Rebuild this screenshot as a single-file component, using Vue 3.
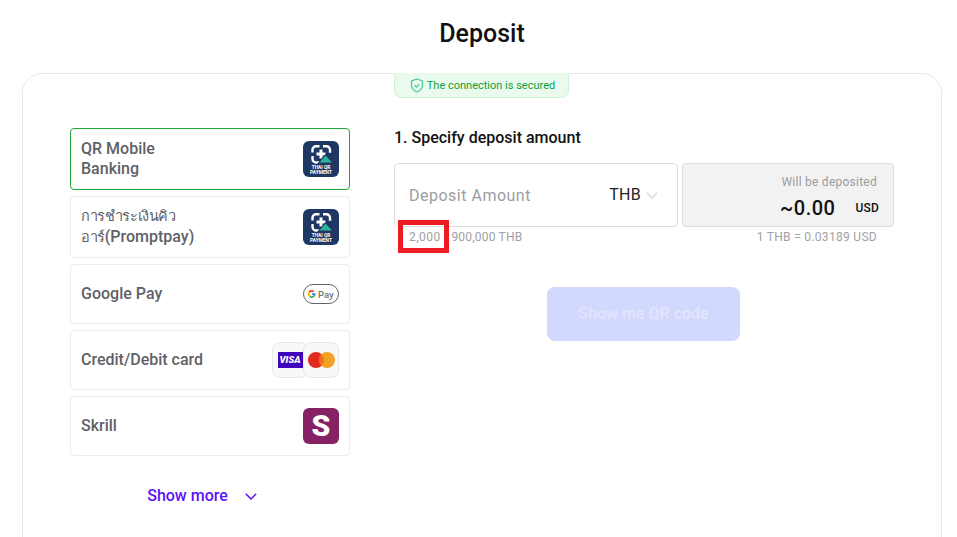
<template>
  <div class="page">
    <h1 class="title">Deposit</h1>
    <div class="card">
      <div class="methods">
        <div
          v-for="m in methods"
          :key="m.name"
          class="method"
          :class="{ active: m.active, tall: m.tall }"
        >
          <span v-if="m.thai" class="method-name">
            <span class="thai">{{ m.thai[0] }}</span><br />
            <span class="thai">{{ m.thai[1] }}</span>{{ m.name }}
          </span>
          <span v-else class="method-name">{{ m.name }}</span>
          <svg v-if="m.icon === 'qr'" class="logo" viewBox="0 0 36 36">
            <rect width="36" height="36" rx="6" fill="#1f3763" />
            <path d="M16.500 5.200h-3.500a3.500 3.500 0 0 0-3.500 3.500v2.800M9.500 15v3a3.500 3.500 0 0 0 3.500 3.500h3.500M20 5.200h3.500a3.500 3.500 0 0 1 3.500 3.500v3" fill="none" stroke="#fff" stroke-width="2.400" />
            <path d="M16.500 8.500h3v3h3v3h-3v3h-3v-3h-3v-3h3z" fill="#fff" />
            <path d="M14 23l8.500-10 9.500 10z" fill="#1f3763" />
            <path d="M16.500 21.500l6-7 6.500 7z" fill="#2bb39a" />
            <text x="18" y="28" class="qr-text">THAI QR</text>
            <text x="18" y="32.500" class="qr-text">PAYMENT</text>
          </svg>
          <svg v-else-if="m.icon === 'gpay'" class="gpay" viewBox="0 0 36 20">
            <rect x="0.500" y="0.500" width="35" height="19" rx="9.500" fill="#fff" stroke="#5f6368" />
            <path d="M12.600 10.100a4 4 0 0 1-.1 1H9v-1.900h3.500z" fill="#4285f4" />
            <path d="M12.500 11.100a4 4 0 0 1-6.300 1.900l1.300-1.200a2.200 2.200 0 0 0 3.200-.7z" fill="#34a853" />
            <path d="M6.200 13a4 4 0 0 1-.7-5.400l1.500 1.200a2.200 2.200 0 0 0 .5 3z" fill="#fbbc04" />
            <path d="M5.500 7.600a4 4 0 0 1 6-.6l-1.300 1.300a2.200 2.200 0 0 0-3.200.5z" fill="#ea4335" />
            <text x="15" y="13.500" class="gpay-text">Pay</text>
          </svg>
          <div v-else-if="m.icon === 'cards'" class="cards">
            <div class="card-chip">
              <div class="visa">VISA</div>
            </div>
            <div class="card-chip over">
              <svg class="mc" viewBox="0 0 27 16">
                <circle cx="8" cy="8" r="8" fill="#e3281f" />
                <circle cx="19" cy="8" r="8" fill="#f1a224" />
                <path d="M13.500 2.200a8 8 0 0 1 0 11.600a8 8 0 0 1 0-11.600z" fill="#ee6f22" />
              </svg>
            </div>
          </div>
          <svg v-else-if="m.icon === 'skrill'" class="logo" viewBox="0 0 36 36">
            <rect width="36" height="36" rx="6" fill="#862165" />
            <text x="18" y="28" class="skrill-text">S</text>
          </svg>
        </div>
        <div class="show-more">
          <span>Show more</span>
          <svg class="more-chevron" viewBox="0 0 12 7">
            <path d="M.8 .8l5.200 5.200 5.200-5.200" fill="none" stroke="#5c12f5" stroke-width="1.500" />
          </svg>
        </div>
      </div>

      <div class="form">
        <div class="secured">
          <svg class="shield" viewBox="0 0 14 15">
            <path d="M7 1l5.500 2v4c0 3.300-2.300 5.600-5.500 7-3.200-1.400-5.500-3.700-5.500-7V3z" fill="none" stroke="#4ec9a6" stroke-width="1.300" />
            <path d="M4.600 7.300l1.800 1.800 3-3" fill="none" stroke="#4ec9a6" stroke-width="1.300" />
          </svg>
          <span>The connection is secured</span>
        </div>
        <h2 class="step">1. Specify deposit amount</h2>
        <div class="fields">
          <div class="amount">
            <span class="placeholder">Deposit Amount</span>
            <span class="currency">THB</span>
            <svg class="chevron" viewBox="0 0 12 7">
              <path d="M.8 .8l5.200 5.200 5.200-5.200" fill="none" stroke="#dcdcdc" stroke-width="1.500" />
            </svg>
          </div>
          <div class="result">
            <span class="result-label">Will be deposited</span>
            <div class="result-value">
              <span class="sum">~0.00</span>
              <span class="unit">USD</span>
            </div>
          </div>
        </div>
        <div class="hints">
          <span class="limits">
            <span class="marked">2,000<i class="marker"></i></span>
            <span class="dash">-</span>
            <span>900,000 THB</span>
          </span>
          <span class="rate">1 THB = 0.03189 USD</span>
        </div>
        <div class="action">
          <button class="submit" disabled>Show me QR code</button>
        </div>
      </div>
    </div>
  </div>
</template>

<script setup>
const methods = [
  { name: 'QR Mobile Banking', icon: 'qr', active: true, tall: true },
  { name: '(Promptpay)', thai: ['การชำระเงินคิว', 'อาร์'], icon: 'qr', tall: true },
  { name: 'Google Pay', icon: 'gpay' },
  { name: 'Credit/Debit card', icon: 'cards' },
  { name: 'Skrill', icon: 'skrill' }
]
</script>

<style>
html, body {
  margin: 0;
  height: 537px;
  overflow: hidden;
  background: #fff;
}
</style>

<style scoped>
.page {
  height: 537px;
  overflow: hidden;
  font-family: Roboto, "Noto Sans", sans-serif;
  color: #111;
}

.title {
  margin: 0 0 0 22px;
  width: 920px;
  height: 73px;
  box-sizing: border-box;
  padding-top: 19px;
  text-align: center;
  font-size: 25px;
  line-height: 30px;
  font-weight: 500;
}

.card {
  box-sizing: border-box;
  width: 920px;
  height: 520px;
  margin-left: 22px;
  padding: 0 47px 0 47px;
  border: 1px solid #e9e9ec;
  border-radius: 20px;
  display: flex;
  gap: 44px;
}

.methods {
  width: 280px;
  padding-top: 54px;
  display: flex;
  flex-direction: column;
  gap: 6px;
  flex: none;
}

.method {
  box-sizing: border-box;
  height: 60px;
  padding: 0 10px 0 10px;
  border: 1px solid #ececef;
  border-radius: 4px;
  display: flex;
  align-items: center;
  justify-content: space-between;
  font-size: 16px;
  line-height: 20px;
  font-weight: 500;
  color: #5f6168;
}

.method.tall {
  height: 62px;
}

.method.active {
  border-color: #1ba83c;
}

.method-name {
  width: 130px;
}

.thai {
  font-size: 14.500px;
  font-weight: 400;
  letter-spacing: -0.400px;
}

.method:not(.tall) .method-name {
  width: auto;
  white-space: nowrap;
}

.logo {
  width: 36px;
  height: 36px;
  flex: none;
}

.qr-text {
  font-size: 4.800px;
  font-weight: 700;
  fill: #fff;
  text-anchor: middle;
}

.skrill-text {
  font-size: 30px;
  font-weight: 900;
  fill: #fff;
  text-anchor: middle;
}

.gpay {
  width: 36px;
  height: 20px;
  flex: none;
}

.gpay-text {
  font-size: 9.500px;
  fill: #70757a;
}

.cards {
  display: flex;
}

.card-chip {
  box-sizing: border-box;
  width: 36px;
  height: 36px;
  border: 1px solid #e8e8e8;
  border-radius: 8px;
  background: #f8f8f8;
  display: flex;
  align-items: center;
  justify-content: center;
}

.card-chip.over {
  margin-left: -5px;
}

.visa {
  width: 25px;
  height: 16px;
  background: #3f04bb;
  color: #fff;
  font-size: 9.500px;
  line-height: 16px;
  font-weight: 900;
  font-style: italic;
  text-align: center;
}

.mc {
  width: 27px;
  height: 16px;
}

.show-more {
  margin-top: 24px;
  padding-right: 16px;
  display: flex;
  align-items: center;
  justify-content: center;
  gap: 17px;
  font-size: 16px;
  line-height: 20px;
  font-weight: 500;
  color: #5c12f5;
}

.more-chevron {
  width: 12px;
  height: 7px;
}

.form {
  width: 500px;
  flex: none;
}

.secured {
  box-sizing: border-box;
  width: 175px;
  height: 25px;
  margin-top: -1px;
  padding-left: 2px;
  border: 1px solid #cff3d8;
  border-top-color: #eafbee;
  border-radius: 0 0 8px 8px;
  background: #eafbee;
  display: flex;
  align-items: center;
  justify-content: center;
  gap: 3px;
  font-size: 11px;
  color: #0fa03c;
}

.shield {
  width: 14px;
  height: 15px;
}

.step {
  margin: 30px 0 0;
  font-size: 16px;
  line-height: 20px;
  font-weight: 500;
  color: #111;
}

.fields {
  margin-top: 15px;
  display: flex;
  gap: 4px;
}

.amount {
  box-sizing: border-box;
  width: 284px;
  height: 64px;
  padding: 0 19px 0 14px;
  border: 1px solid #dedede;
  border-radius: 4px;
  display: flex;
  align-items: center;
  font-size: 16px;
  letter-spacing: 0.500px;
}

.placeholder {
  flex: 1;
  color: #9c9ca1;
}

.currency {
  color: #222;
  margin-right: 5px;
  padding-bottom: 1px;
  letter-spacing: 0.300px;
}

.chevron {
  width: 12px;
  height: 7px;
}

.result {
  box-sizing: border-box;
  width: 212px;
  height: 64px;
  padding: 11px 14px 0 0;
  border: 1px solid #dedede;
  border-radius: 4px;
  background: #f2f2f2;
  text-align: right;
}

.result-label {
  display: block;
  padding-right: 2px;
  font-size: 12px;
  line-height: 14px;
  letter-spacing: 0.250px;
  color: #9c9c9c;
}

.result-value {
  margin-top: 6px;
  display: flex;
  align-items: center;
  justify-content: flex-end;
  gap: 20px;
  color: #111;
}

.sum {
  font-size: 20px;
  line-height: 26px;
  font-weight: 500;
  letter-spacing: 0.500px;
}

.unit {
  font-size: 12px;
  font-weight: 500;
  letter-spacing: 0.200px;
}

.hints {
  box-sizing: border-box;
  width: 500px;
  padding: 3px 17px 0 15px;
  display: flex;
  justify-content: space-between;
  font-size: 12px;
  line-height: 14px;
  letter-spacing: 0.200px;
  color: #a0a0a4;
}

.rate {
  letter-spacing: 0.300px;
}

.limits {
  display: flex;
  gap: 3.500px;
}

.marked {
  position: relative;
  letter-spacing: 0.500px;
}

/* red annotation box from the screenshot */
.marker {
  position: absolute;
  left: -11px;
  top: -10px;
  width: 41px;
  height: 23px;
  border: 5px solid #ed1c24;
}

.action {
  margin-top: 43px;
  padding-left: 153px;
}

.submit {
  width: 193px;
  height: 54px;
  padding: 0 0 2px;
  border: none;
  border-radius: 8px;
  background: #d2d8fe;
  color: #e0e4fc;
  font-family: inherit;
  font-size: 16px;
  font-weight: 700;
}
</style>
